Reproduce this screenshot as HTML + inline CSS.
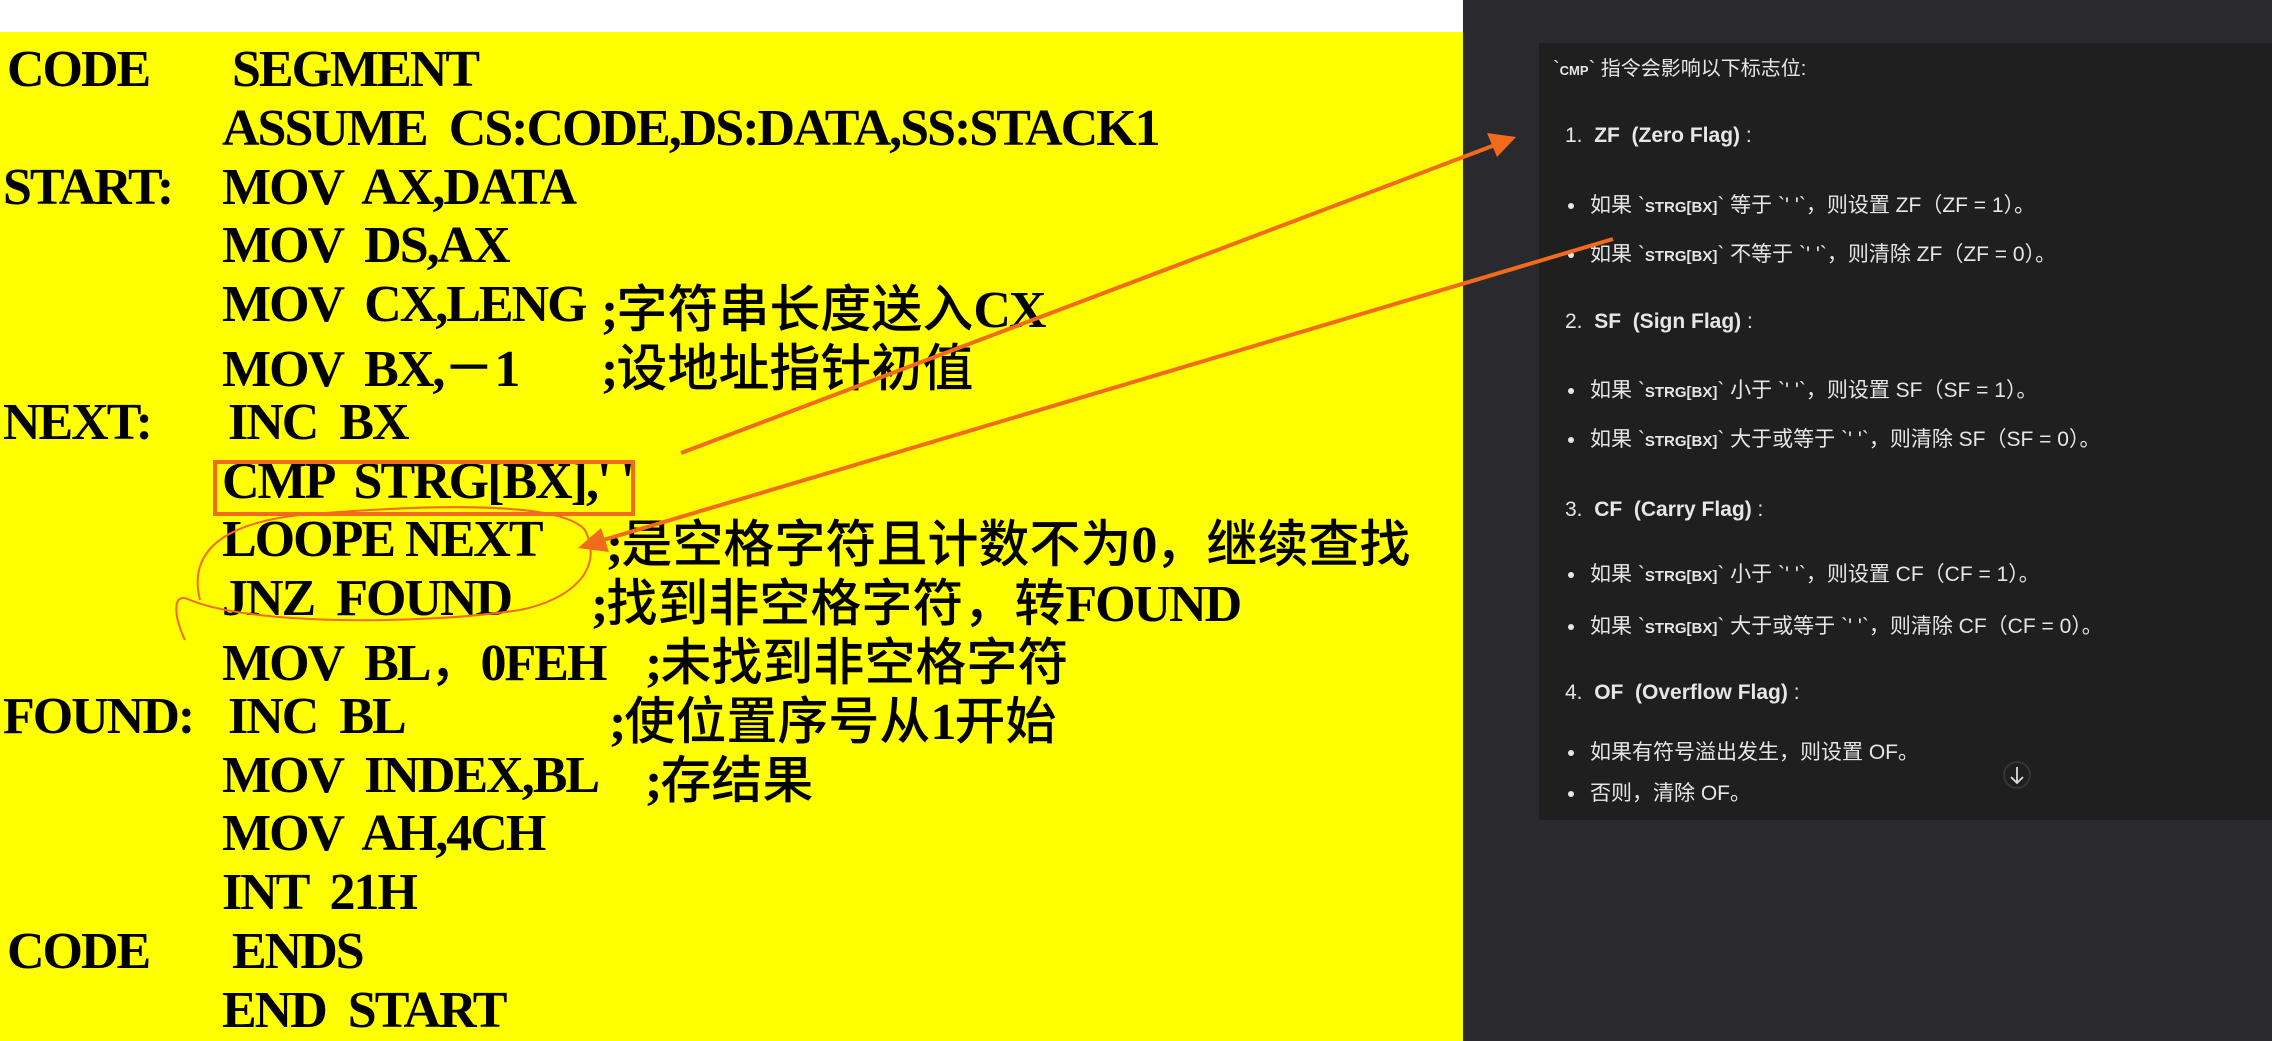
<!DOCTYPE html>
<html><head><meta charset="utf-8"><style>
*{margin:0;padding:0;box-sizing:border-box}
html,body{width:2272px;height:1041px;overflow:hidden}
body{position:relative;background:#fff;font-family:"Liberation Serif","Noto Sans CJK SC",serif}
#yel{position:absolute;left:0;top:32px;width:1463px;height:1009px;background:#ffff00}
#dark{position:absolute;left:1463px;top:0;width:809px;height:1041px;background:#2a2a2e}
#inner{position:absolute;left:1539px;top:43px;width:733px;height:777px;background:#1f1f1f}
.l{position:absolute;font-weight:bold;font-size:52px;line-height:62px;color:#000;letter-spacing:-2px;white-space:pre}
.c{font-family:"Noto Sans CJK SC",sans-serif;font-weight:500;letter-spacing:0;font-size:51px}
.r{position:absolute;font-family:"Liberation Sans","Noto Sans CJK SC",sans-serif;font-size:21px;color:#e6e6e6;white-space:pre;line-height:26px}
.r b{font-weight:bold}
.k{font-family:"Liberation Sans",sans-serif;font-weight:bold;font-size:15px}
.dot{position:absolute;width:6px;height:6px;border-radius:50%;background:#e6e6e6}
</style></head><body>
<div id="yel"></div>
<div id="dark"></div>
<div id="inner"></div>

<div class="l" style="left:7px;top:39px">CODE</div><div class="l" style="left:232px;top:39px">SEGMENT</div>
<div class="l" style="left:222px;top:98px">ASSUME  CS:CODE,DS:DATA,SS:STACK1</div>
<div class="l" style="left:3px;top:157px">START:</div><div class="l" style="left:222px;top:157px">MOV  AX,DATA</div>
<div class="l" style="left:222px;top:215px">MOV  DS,AX</div>
<div class="l" style="left:222px;top:274px">MOV  CX,LENG</div><div class="l" style="left:601px;top:274px">;<span class="c">字符串长度送入</span>CX</div>
<div class="l" style="left:222px;top:333px">MOV  BX,<span class="c">－</span>1</div><div class="l" style="left:601px;top:333px">;<span class="c">设地址指针初值</span></div>
<div class="l" style="left:3px;top:392px">NEXT:</div><div class="l" style="left:228px;top:392px">INC  BX</div>
<div class="l" style="left:222px;top:451px">CMP  STRG[BX],' '</div>
<div class="l" style="left:222px;top:509px">LOOPE NEXT</div><div class="l" style="left:606px;top:509px">;<span class="c">是空格字符且计数不为</span>0<span class="c">，继续查找</span></div>
<div class="l" style="left:222px;top:568px">JNZ  FOUND</div><div class="l" style="left:591px;top:568px">;<span class="c">找到非空格字符，转</span>FOUND</div>
<div class="l" style="left:222px;top:627px">MOV  BL<span class="c">，</span>0FEH</div><div class="l" style="left:645px;top:627px">;<span class="c">未找到非空格字符</span></div>
<div class="l" style="left:3px;top:686px">FOUND:</div><div class="l" style="left:228px;top:686px">INC  BL</div><div class="l" style="left:609px;top:686px">;<span class="c">使位置序号从</span>1<span class="c">开始</span></div>
<div class="l" style="left:222px;top:745px">MOV  INDEX,BL</div><div class="l" style="left:645px;top:745px">;<span class="c">存结果</span></div>
<div class="l" style="left:222px;top:803px">MOV  AH,4CH</div>
<div class="l" style="left:222px;top:862px">INT  21H</div>
<div class="l" style="left:7px;top:921px">CODE</div><div class="l" style="left:232px;top:921px">ENDS</div>
<div class="l" style="left:222px;top:980px">END  START</div>

<div class="r" style="left:1553px;top:56px;font-size:20px">`<span class="k" style="font-size:13px">CMP</span>` 指令会影响以下标志位:</div>
<div class="r" style="left:1565px;top:123px">1.  <b>ZF  (Zero Flag)</b> :</div>
<div class="dot" style="left:1568px;top:203px"></div><div class="r" style="left:1590px;top:193px">如果 `<span class="k">STRG[BX]</span>` 等于 `' '`，则设置 ZF（ZF = 1）。</div>
<div class="dot" style="left:1568px;top:252px"></div><div class="r" style="left:1590px;top:242px">如果 `<span class="k">STRG[BX]</span>` 不等于 `' '`，则清除 ZF（ZF = 0）。</div>
<div class="r" style="left:1565px;top:309px">2.  <b>SF  (Sign Flag)</b> :</div>
<div class="dot" style="left:1568px;top:388px"></div><div class="r" style="left:1590px;top:378px">如果 `<span class="k">STRG[BX]</span>` 小于 `' '`，则设置 SF（SF = 1）。</div>
<div class="dot" style="left:1568px;top:437px"></div><div class="r" style="left:1590px;top:427px">如果 `<span class="k">STRG[BX]</span>` 大于或等于 `' '`，则清除 SF（SF = 0）。</div>
<div class="r" style="left:1565px;top:497px">3.  <b>CF  (Carry Flag)</b> :</div>
<div class="dot" style="left:1568px;top:572px"></div><div class="r" style="left:1590px;top:562px">如果 `<span class="k">STRG[BX]</span>` 小于 `' '`，则设置 CF（CF = 1）。</div>
<div class="dot" style="left:1568px;top:624px"></div><div class="r" style="left:1590px;top:614px">如果 `<span class="k">STRG[BX]</span>` 大于或等于 `' '`，则清除 CF（CF = 0）。</div>
<div class="r" style="left:1565px;top:680px">4.  <b>OF  (Overflow Flag)</b> :</div>
<div class="dot" style="left:1568px;top:750px"></div><div class="r" style="left:1590px;top:740px">如果有符号溢出发生，则设置 OF。</div>
<div class="dot" style="left:1568px;top:791px"></div><div class="r" style="left:1590px;top:781px">否则，清除 OF。</div>

<svg style="position:absolute;left:0;top:0" width="2272" height="1041">
<circle cx="2017" cy="775" r="13" fill="#1f1f1f" stroke="#3a3a3a" stroke-width="1.5"/>
<path d="M2017 767 V782 M2011 777 L2017 783 L2023 777" stroke="#ddd" stroke-width="1.8" fill="none"/>
<rect x="215" y="462" width="418" height="52" fill="none" stroke="#f26a1b" stroke-width="4"/>
<path d="M200 600 C190 560 210 525 300 515 C420 505 560 500 585 530 C605 570 570 600 520 610 C420 625 250 625 190 600 C170 590 175 620 185 640" fill="none" stroke="#f26a1b" stroke-width="2"/>
<line x1="681" y1="453" x2="1495" y2="145" stroke="#f26a1b" stroke-width="4"/>
<polygon points="1516,137 1487,133 1497,157" fill="#f26a1b"/>
<line x1="1613" y1="239" x2="600" y2="541" stroke="#f26a1b" stroke-width="4"/>
<polygon points="578,548 601,528 609,552" fill="#f26a1b"/>
</svg>
</body></html>
